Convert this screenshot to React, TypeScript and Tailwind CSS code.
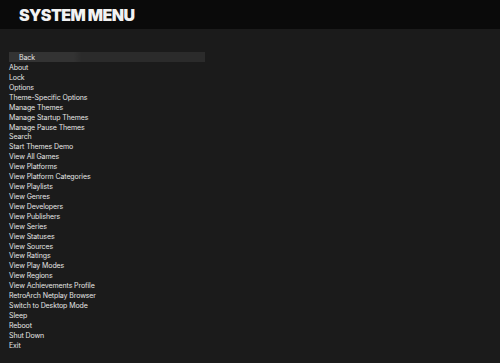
import React from "react";

const items = [
  "About",
  "Lock",
  "Options",
  "Theme-Specific Options",
  "Manage Themes",
  "Manage Startup Themes",
  "Manage Pause Themes",
  "Search",
  "Start Themes Demo",
  "View All Games",
  "View Platforms",
  "View Platform Categories",
  "View Playlists",
  "View Genres",
  "View Developers",
  "View Publishers",
  "View Series",
  "View Statuses",
  "View Sources",
  "View Ratings",
  "View Play Modes",
  "View Regions",
  "View Achievements Profile",
  "RetroArch Netplay Browser",
  "Switch to Desktop Mode",
  "Sleep",
  "Reboot",
  "Shut Down",
  "Exit",
];

export default function App() {
  return (
    <div className="w-[500px] h-[363px] bg-[#1b1b1b] flex flex-col overflow-hidden" style={{ fontFamily: "Inter, 'Liberation Sans', sans-serif" }}>
      <div className="h-[29px] bg-[#0a0a0a] flex items-center pl-[19px] shrink-0">
        <span className="text-[16px] font-black text-[#f2f2f2] tracking-[-0.6px] leading-none">SYSTEM MENU</span>
      </div>
      <div className="pt-[23px] pl-[9px] flex flex-col">
        <div className="w-[196px] h-[10px] bg-[linear-gradient(90deg,#333333_0%,#333333_33%,#2b2b2b_37%,#2b2b2b_100%)] flex items-center pl-[10px]">
          <span className="text-[7px] tracking-[-0.1px] leading-[10px] text-[#e6e6e6] translate-y-[0.5px]">Back</span>
        </div>
        {items.map((t) => (
          <div key={t} className="h-[9.93px] flex items-center">
            <span className="text-[7px] tracking-[-0.1px] leading-[10px] text-[#e6e6e6] whitespace-nowrap translate-y-[1px]">{t}</span>
          </div>
        ))}
      </div>
    </div>
  );
}
